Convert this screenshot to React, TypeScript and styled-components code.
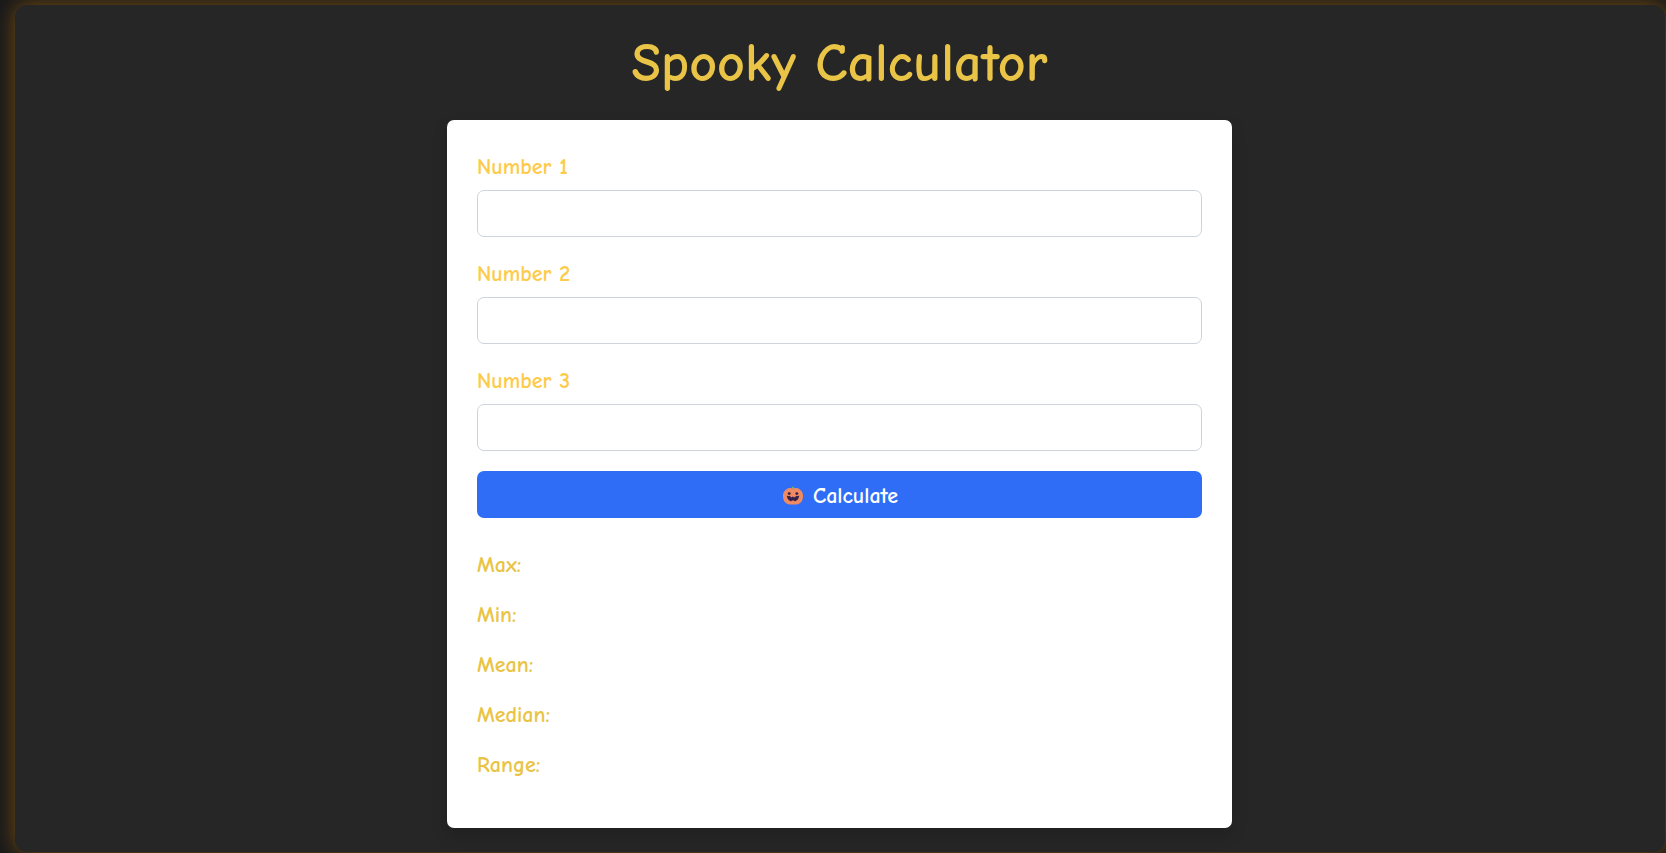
import React, { useState } from "react";
import styled, { createGlobalStyle } from "styled-components";

const GlobalStyle = createGlobalStyle`
  *, *::before, *::after {
    box-sizing: border-box;
  }

  body {
    margin: 0;
    background: #1a1a1a;
    font-family: "Comic Sans MS", "Comic Neue", "Open Sans", sans-serif;
    font-size: 22px;
    line-height: 34px;
  }
`;

const Page = styled.div`
  min-height: 100vh;
  padding: 5px 1px 1px 15px;
  display: flex;
  overflow: hidden;
`;

const Panel = styled.main`
  flex: 1;
  min-width: 0;
  padding: 25px 21px 24px 20px;
  border-radius: 12px;
  background: #262626;
  box-shadow: 0 0 20px rgba(255, 153, 0, 0.4);
  display: flex;
  flex-direction: column;
  align-items: center;
  gap: 22px;
`;

const Title = styled.h1`
  margin: 0;
  color: #e9c446;
  font-size: 54px;
  font-weight: 700;
  line-height: 68px;
  text-align: center;
`;

const Card = styled.section`
  width: 100%;
  max-width: 785px;
  padding: 30px;
  border-radius: 7px;
  background: #ffffff;
  box-shadow: 0 8px 16px rgba(0, 0, 0, 0.15);
`;

const Form = styled.form`
  display: flex;
  flex-direction: column;
  gap: 20px;
`;

const Field = styled.div`
  display: flex;
  flex-direction: column;
  gap: 6px;
`;

const Label = styled.label`
  color: #fdcb4b;
  font-weight: 700;
`;

const NumberInput = styled.input`
  width: 100%;
  height: 47px;
  padding: 0 12px;
  border: 1px solid #ced4da;
  border-radius: 7px;
  background: #ffffff;
  color: #262626;
  font: inherit;
  appearance: textfield;

  &::-webkit-inner-spin-button {
    appearance: none;
  }
`;

const CalculateButton = styled.button`
  height: 47px;
  padding: 2px 12px 0;
  border: 0;
  border-radius: 7px;
  background: #306df6;
  color: #ffffff;
  font: inherit;
  font-weight: 700;
  cursor: pointer;
  display: flex;
  align-items: center;
  justify-content: center;
  gap: 8px;
`;

const Results = styled.div`
  padding: 30px 0 16px;
  display: flex;
  flex-direction: column;
  gap: 16px;
`;

const Result = styled.p`
  margin: 0;
  color: #e9c446;
  font-weight: 700;
`;

const Pumpkin = () => (
  <svg width="24" height="22" viewBox="0 0 24 22" aria-hidden="true">
    <path d="M11.4 4.8 C11.6 3.2 11 2.6 10.4 2 L12.4 1.5 C13.3 2.4 13.4 3.6 13.2 4.8Z" fill="#73b84a" />
    <path
      d="M12 3.6 C14 2.8 17 2.9 18.8 4.4 C21.4 6 22.2 8.8 22 11.6 C22 15.1 20.2 18 17.6 18.9 C15.8 19.5 13.9 19.4 12 19.4 C10.1 19.4 8.2 19.5 6.4 18.9 C3.8 18 2 15.1 2 11.6 C1.8 8.8 2.6 6 5.2 4.4 C7 2.9 10 2.8 12 3.6Z"
      fill="#f08a63"
    />
    <ellipse cx="8.2" cy="8.6" rx="1.5" ry="1.3" fill="#35204a" />
    <ellipse cx="15.8" cy="8.6" rx="1.5" ry="1.3" fill="#35204a" />
    <path
      d="M5.8 10.4 L7.4 11.2 L9 10.8 L9.8 12.2 L11.2 12.2 L11.8 11.2 L12.8 12.2 L14.2 12.2 L15 10.8 L16.6 11.2 L18.2 10.4 C18 13.8 15.6 16.2 13.6 16.2 L13.2 15.4 L10.8 15.4 L10.4 16.2 C8.4 16.2 6 13.8 5.8 10.4Z"
      fill="#35204a"
    />
  </svg>
);

const names = ["Max", "Min", "Mean", "Median", "Range"] as const;
type Stats = Partial<Record<(typeof names)[number], number>>;

export default function App() {
  const [values, setValues] = useState(["", "", ""]);
  const [stats, setStats] = useState<Stats>({});

  const calculate = (event: React.FormEvent) => {
    event.preventDefault();
    if (values.some((value) => value === "")) return;
    const sorted = values.map(Number).sort((a, b) => a - b);
    setStats({
      Max: sorted[2],
      Min: sorted[0],
      Mean: sorted.reduce((sum, n) => sum + n, 0) / 3,
      Median: sorted[1],
      Range: sorted[2] - sorted[0],
    });
  };

  return (
    <>
      <GlobalStyle />
      <Page>
        <Panel>
          <Title>Spooky Calculator</Title>
          <Card>
            <Form onSubmit={calculate}>
              {values.map((value, index) => (
                <Field key={index}>
                  <Label htmlFor={`number-${index + 1}`}>Number {index + 1}</Label>
                  <NumberInput
                    id={`number-${index + 1}`}
                    type="number"
                    value={value}
                    onChange={(event) =>
                      setValues(values.map((v, i) => (i === index ? event.target.value : v)))
                    }
                  />
                </Field>
              ))}
              <CalculateButton type="submit">
                <Pumpkin />
                Calculate
              </CalculateButton>
            </Form>
            <Results aria-live="polite">
              {names.map((name) => (
                <Result key={name}>
                  {name}: {stats[name]}
                </Result>
              ))}
            </Results>
          </Card>
        </Panel>
      </Page>
    </>
  );
}
